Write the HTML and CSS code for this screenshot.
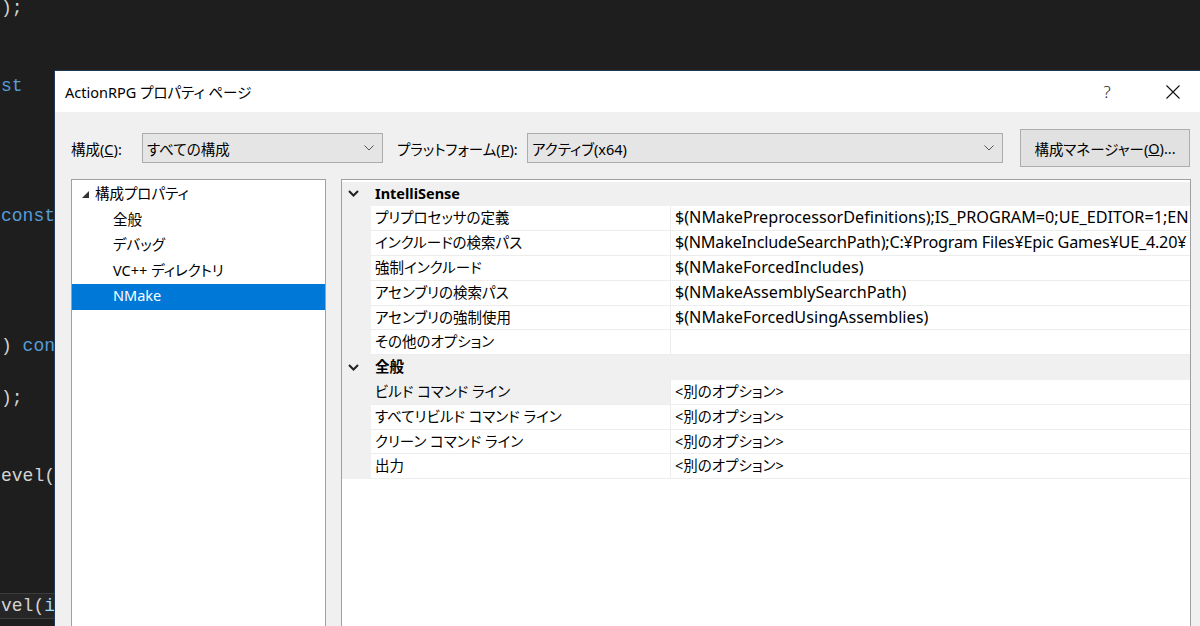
FILE: index.html
```html
<!DOCTYPE html>
<html lang="ja">
<head>
<meta charset="utf-8">
<title>ActionRPG プロパティ ページ</title>
<link rel="stylesheet" href="styles.css">
</head>
<body>
<div class="editor">
  <div class="ln"><span class="pn">);</span></div>
  <div class="ln"></div>
  <div class="ln"></div>
  <div class="ln"><span class="kw">st</span></div>
  <div class="ln"></div>
  <div class="ln"></div>
  <div class="ln"></div>
  <div class="ln"></div>
  <div class="ln"><span class="kw">const</span></div>
  <div class="ln"></div>
  <div class="ln"></div>
  <div class="ln"></div>
  <div class="ln"></div>
  <div class="ln"><span class="pn">) </span><span class="kw">con</span></div>
  <div class="ln"></div>
  <div class="ln"><span class="pn">);</span></div>
  <div class="ln"></div>
  <div class="ln"></div>
  <div class="ln"><span class="pn">evel(</span></div>
  <div class="ln"></div>
  <div class="ln"></div>
  <div class="ln"></div>
  <div class="ln"></div>
  <div class="ln ln-cur"><span class="pn">vel(</span><span class="id">i</span></div>
</div>

<div class="dialog">
  <div class="titlebar">
    <span class="title">ActionRPG プロパティ ページ</span>
    <span class="help">?</span>
    <span class="close">
      <svg width="14" height="14" viewBox="0 0 14 14"><path d="M0.5 0.5L13.5 13.5M13.5 0.5L0.5 13.5" stroke="#111" stroke-width="1.1" fill="none"/></svg>
    </span>
  </div>

  <div class="toolbar">
    <span class="lbl lbl-config">構成(<u>C</u>):</span>
    <div class="combo combo-config">
      <span class="combo-text">すべての構成</span>
      <svg class="chev" width="10" height="6" viewBox="0 0 10 6"><path d="M0.5 0.5L5 5L9.5 0.5" stroke="#555" stroke-width="1" fill="none"/></svg>
    </div>
    <span class="lbl lbl-plat">プラットフォーム(<u>P</u>):</span>
    <div class="combo combo-plat">
      <span class="combo-text">アクティブ(x64)</span>
      <svg class="chev" width="10" height="6" viewBox="0 0 10 6"><path d="M0.5 0.5L5 5L9.5 0.5" stroke="#555" stroke-width="1" fill="none"/></svg>
    </div>
    <div class="btn">構成マネージャー(<u>O</u>)...</div>
  </div>

  <div class="panels">
    <div class="tree">
      <div class="trow trow-root">
        <svg class="tri" width="7" height="7" viewBox="0 0 7 7"><path d="M7 0L7 7L0 7Z" fill="#333"/></svg>
        <span>構成プロパティ</span>
      </div>
      <div class="trow trow-child">全般</div>
      <div class="trow trow-child">デバッグ</div>
      <div class="trow trow-child">VC++ ディレクトリ</div>
      <div class="trow trow-child trow-sel">NMake</div>
    </div>

    <div class="grid">
      <div class="prow prow-cat">
        <span class="gut"><svg width="11" height="7" viewBox="0 0 11 7"><path d="M1 1L5.5 5.5L10 1" stroke="#222" stroke-width="2" fill="none"/></svg></span>
        <span class="cat-name">IntelliSense</span>
      </div>
      <div class="prow"><span class="gut"></span><span class="pl">プリプロセッサの定義</span><span class="pv">$(NMakePreprocessorDefinitions);IS_PROGRAM=0;UE_EDITOR=1;EN</span></div>
      <div class="prow"><span class="gut"></span><span class="pl">インクルードの検索パス</span><span class="pv pv-path">$(NMakeIncludeSearchPath);C:¥Program Files¥Epic Games¥UE_4.20¥</span></div>
      <div class="prow"><span class="gut"></span><span class="pl">強制インクルード</span><span class="pv">$(NMakeForcedIncludes)</span></div>
      <div class="prow"><span class="gut"></span><span class="pl">アセンブリの検索パス</span><span class="pv">$(NMakeAssemblySearchPath)</span></div>
      <div class="prow"><span class="gut"></span><span class="pl">アセンブリの強制使用</span><span class="pv">$(NMakeForcedUsingAssemblies)</span></div>
      <div class="prow"><span class="gut"></span><span class="pl">その他のオプション</span><span class="pv"></span></div>
      <div class="prow prow-cat">
        <span class="gut"><svg width="11" height="7" viewBox="0 0 11 7"><path d="M1 1L5.5 5.5L10 1" stroke="#222" stroke-width="2" fill="none"/></svg></span>
        <span class="cat-name">全般</span>
      </div>
      <div class="prow prow-sel"><span class="gut"></span><span class="pl">ビルド コマンド ライン</span><span class="pv pv-alt">&lt;別のオプション&gt;</span></div>
      <div class="prow"><span class="gut"></span><span class="pl">すべてリビルド コマンド ライン</span><span class="pv pv-alt">&lt;別のオプション&gt;</span></div>
      <div class="prow"><span class="gut"></span><span class="pl">クリーン コマンド ライン</span><span class="pv pv-alt">&lt;別のオプション&gt;</span></div>
      <div class="prow"><span class="gut"></span><span class="pl">出力</span><span class="pv pv-alt">&lt;別のオプション&gt;</span></div>
    </div>
  </div>
</div>
</body>
</html>
```

FILE: styles.css
```css
html, body {
  margin: 0;
  padding: 0;
  width: 1200px;
  height: 626px;
  overflow: hidden;
  background: #1e1e1e;
}

body {
  position: relative;
}

/* code editor behind the dialog */
.editor {
  margin-top: -5px;
  font-family: "Liberation Mono", "DejaVu Sans Mono", monospace;
  font-size: 18px;
  color: #d4d4d4;
}

.ln {
  height: 26px;
  line-height: 26px;
  white-space: pre;
  padding-left: 1px;
}

.ln-cur {
  background: #262626;
  box-shadow: inset 0 1px 0 #3c3c3c, inset 0 -1px 0 #3c3c3c;
}

.kw { color: #569cd6; }
.pn { color: #d4d4d4; }
.id { color: #9cdcfe; }

/* dialog window */
.dialog {
  position: absolute;
  left: 54px;
  top: 70px;
  width: 1170px;
  height: 600px;
  background: #f0f0f0;
  border-left: 1px solid #1d3b58;
  border-top: 1px solid #1d3b58;
  font-family: "Noto Sans", "Noto Sans CJK JP", sans-serif;
  font-feature-settings: "palt" 1;
  font-size: 14.5px;
  color: #000;
}

.titlebar {
  height: 41px;
  background: #fff;
  display: flex;
  align-items: center;
  padding-left: 10px;
}

.title {
  flex: 1;
  font-size: 14.5px;
}

.help {
  width: 20px;
  text-align: center;
  font-size: 17px;
  font-weight: 300;
  color: #222;
  margin-right: 2px;
}

.close {
  display: flex;
  margin-left: 47px;
  margin-right: 45px;
}

.toolbar {
  display: flex;
  align-items: center;
  height: 38px;
  margin-top: 17px;
  padding-left: 16px;
}

.lbl {
  white-space: nowrap;
}

.lbl-config { width: 71px; }
.lbl-plat { width: 130px; margin-left: 14px; }

.combo {
  background: #e5e5e5;
  border: 1px solid #acacac;
  display: flex;
  align-items: center;
  padding-left: 4px;
  box-sizing: border-box;
  height: 30px;
}

.combo-config { width: 241px; }
.combo-plat { width: 476px; }

.combo-text { flex: 1; }

.chev { margin-right: 8px; }

.btn {
  margin-left: 17px;
  width: 170px;
  height: 38px;
  box-sizing: border-box;
  background: #e1e1e1;
  border: 1px solid #adadad;
  display: flex;
  align-items: center;
  justify-content: center;
}

.panels {
  display: flex;
  margin-top: 12px;
  padding-left: 16px;
  gap: 15px;
}

.tree {
  width: 255px;
  height: 460px;
  box-sizing: border-box;
  background: #fff;
  border: 1px solid #a0a0a0;
  padding-top: 2px;
}

.trow {
  height: 25.5px;
  box-sizing: border-box;
  padding-bottom: 4px;
  white-space: nowrap;
  display: flex;
  align-items: center;
}

.trow-root { padding-left: 10px; }
.trow-root .tri { margin-right: 6px; margin-top: 3px; }
.trow-child { padding-left: 41px; }

.trow-sel {
  background: #0078d7;
  color: #fff;
}

.grid {
  width: 850px;
  height: 460px;
  box-sizing: border-box;
  background: #fff;
  border: 1px solid #a0a0a0;
  padding-top: 1.6px;
  overflow: hidden;
}

.prow {
  display: grid;
  grid-template-columns: 29px 300px 1fr;
  height: 24.8px;
  line-height: 23px;
  white-space: nowrap;
}

.gut {
  background: #f0f0f0;
  display: flex;
  align-items: center;
  padding-left: 6px;
}

.pl {
  padding-left: 4px;
  border-bottom: 1px solid #ededed;
  border-right: 1px solid #ededed;
  overflow: hidden;
}

.pv {
  padding-left: 4px;
  border-bottom: 1px solid #ededed;
  overflow: hidden;
  font-size: 16.2px;
}

.pv-path {
  letter-spacing: -0.2px;
}

.pv-alt {
  font-size: 14.5px;
}

.prow-cat {
  background: #f0f0f0;
}

.cat-name {
  grid-column: 2 / 4;
  padding-left: 4px;
  font-weight: bold;
}

.prow-sel .pl {
  background: #f0f0f0;
}
```
